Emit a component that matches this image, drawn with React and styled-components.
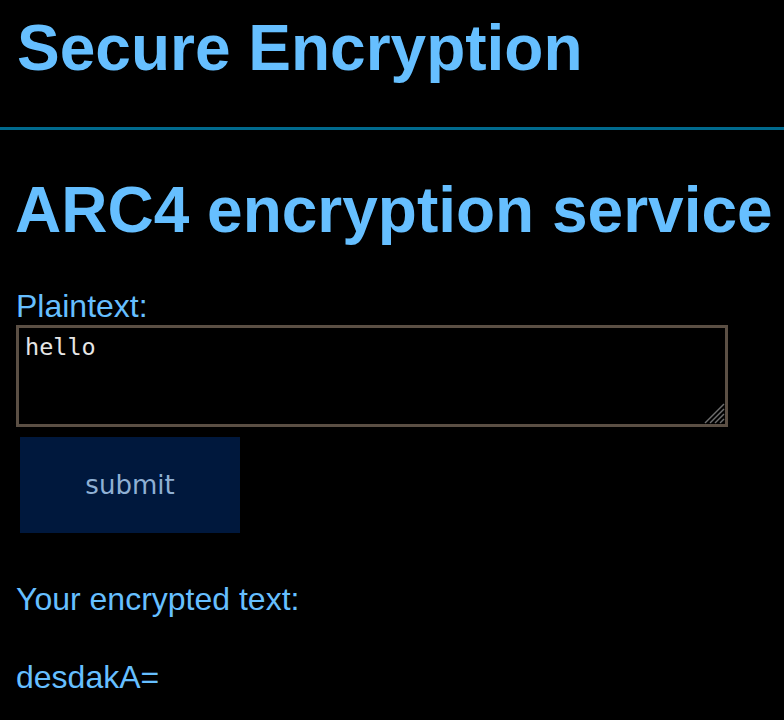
import React, { useState } from 'react'
import styled, { createGlobalStyle } from 'styled-components'

const Global = createGlobalStyle`
  html, body {
    margin: 0;
    background: #000000;
  }
  body {
    font-family: "Liberation Sans", Arial, sans-serif;
    color: #66bfff;
  }
`

const Header = styled.header`
  padding: 12px 17px 0;
  border-bottom: 3px solid #006a8e;
  box-sizing: border-box;
  height: 130px;
`

const Title = styled.h1`
  margin: 0;
  font-size: 64px;
  font-weight: bold;
  line-height: 72px;
  color: #66bfff;
`

const Main = styled.main`
  padding: 0 16px;
`

const Heading = styled.h2`
  margin: 40px 0 0 -1px;
  font-size: 64px;
  font-weight: bold;
  line-height: 80px;
  color: #66bfff;
  white-space: nowrap;
`

const Form = styled.form`
  display: flex;
  flex-direction: column;
  align-items: flex-start;
  margin-top: 37px;
`

const Label = styled.label`
  font-size: 32px;
  line-height: 38px;
`

const AreaWrap = styled.div`
  position: relative;
  width: 712px;
  height: 102px;
`

const Area = styled.textarea`
  display: block;
  width: 100%;
  height: 100%;
  box-sizing: border-box;
  background: #000;
  border: 3px solid #5b4f44;
  color: #e6e6e6;
  font-family: "DejaVu Sans Mono", monospace;
  font-size: 23.5px;
  line-height: 28px;
  padding: 5px 6px;
  outline: none;
  resize: none;
`

const Grip = styled.svg`
  position: absolute;
  right: 3px;
  bottom: 3px;
  width: 21px;
  height: 21px;
  pointer-events: none;
`

const Button = styled.button`
  margin: 10px 0 0 4px;
  width: 220px;
  height: 96px;
  border: none;
  background: #00183d;
  color: #8fb0d4;
  font-family: "DejaVu Sans", sans-serif;
  font-size: 26px;
`

const Result = styled.p`
  margin: 47px 0 0;
  font-size: 32px;
  line-height: 38px;
`

const Output = styled.p`
  margin: 40px 0 0;
  font-size: 32px;
  line-height: 38px;
`

export default function App() {
  const [text, setText] = useState('hello')
  return (
    <>
      <Global />
      <Header>
        <Title>Secure Encryption</Title>
      </Header>
      <Main>
        <Heading>ARC4 encryption service</Heading>
        <Form onSubmit={e => e.preventDefault()}>
          <Label htmlFor="plain">Plaintext:</Label>
          <AreaWrap>
            <Area id="plain" value={text} onChange={e => setText(e.target.value)} />
            <Grip viewBox="0 0 21 21">
              <g stroke="#6e6e6e" strokeWidth="1.4">
                <line x1="1" y1="20" x2="20" y2="1" />
                <line x1="6" y1="20" x2="20" y2="6" />
                <line x1="11" y1="20" x2="20" y2="11" />
                <line x1="16" y1="20" x2="20" y2="16" />
              </g>
            </Grip>
          </AreaWrap>
          <Button type="submit">submit</Button>
        </Form>
        <Result>Your encrypted text:</Result>
        <Output>desdakA=</Output>
      </Main>
    </>
  )
}
